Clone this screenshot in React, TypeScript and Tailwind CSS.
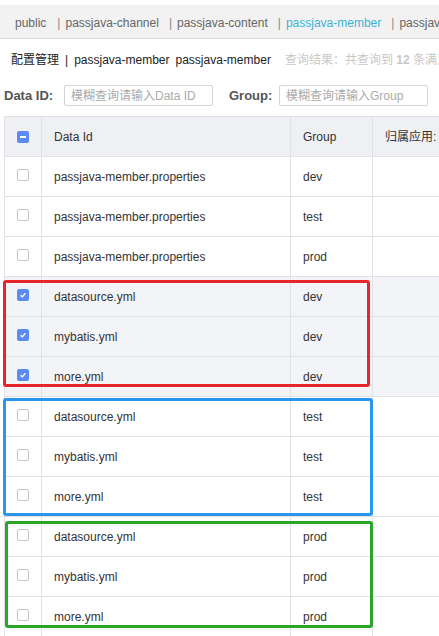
import React from "react";

const rows = [
  { id: "passjava-member.properties", group: "dev", checked: false },
  { id: "passjava-member.properties", group: "test", checked: false },
  { id: "passjava-member.properties", group: "prod", checked: false },
  { id: "datasource.yml", group: "dev", checked: true },
  { id: "mybatis.yml", group: "dev", checked: true },
  { id: "more.yml", group: "dev", checked: true },
  { id: "datasource.yml", group: "test", checked: false },
  { id: "mybatis.yml", group: "test", checked: false },
  { id: "more.yml", group: "test", checked: false },
  { id: "datasource.yml", group: "prod", checked: false },
  { id: "mybatis.yml", group: "prod", checked: false },
  { id: "more.yml", group: "prod", checked: false },
];

const tabs = ["passjava-channel", "passjava-content", "passjava-member", "passjava-user"];

const Checkbox = ({ checked }: { checked: boolean }) =>
  checked ? (
    <div className="w-[12px] h-[12px] rounded-[2px] bg-[#5b8af5] flex items-center justify-center">
      <svg width="8" height="8" viewBox="0 0 8 8">
        <path d="M1.5 4.2 L3.3 5.8 L6.5 2.3" stroke="white" strokeWidth="1.4" fill="none" />
      </svg>
    </div>
  ) : (
    <div className="w-[12px] h-[12px] rounded-[2px] border border-[#c4c6cc] bg-white" />
  );

const App = () => {
  return (
    <div
      className="w-[439px] h-[636px] overflow-hidden bg-white text-[#333] relative"
      style={{ fontFamily: '"Liberation Sans", "Noto Sans CJK SC", sans-serif' }}
    >
      <div className="mt-[5px] h-[34px] pt-[3px] bg-[#f2f2f2] border-b border-[#d9d9d9] flex items-center pl-[15px] text-[12px] text-[#666] whitespace-nowrap overflow-hidden">
        <span>public</span>
        {tabs.map((t, i) => (
          <span key={i} className={i === 0 ? "ml-[11px]" : "ml-[10px]"}>
            <span className="mr-[5px] text-[#888]">|</span>
            <span className={t === "passjava-member" ? "text-[#3ab4d6]" : ""}>{t}</span>
          </span>
        ))}
      </div>

      <div className="mt-[10px] ml-[4px] h-[21px] flex items-center whitespace-nowrap text-[12px]">
        <div className="w-[2px] h-[21px] bg-[#1c8fd3]" />
        <span className="ml-[7px] text-[#222]">配置管理</span>
        <span className="mx-[6px] text-[#222]">|</span>
        <span className="text-[#222]">passjava-member</span>
        <span className="ml-[6px] text-[#222]">passjava-member</span>
        <span className="ml-[14px] text-[#c8c8c8]">
          查询结果：共查询到 <b className="font-bold">12</b> 条满足要求的配置。
        </span>
      </div>

      <div className="mt-[15px] ml-[4px] flex items-center whitespace-nowrap">
        <span className="text-[13px] font-bold text-[#555] w-[60px]">Data ID:</span>
        <div className="w-[149px] h-[21px] border border-[#d4d4d4] rounded-[2px] flex items-center pl-[6px] text-[12px] text-[#aaa]">
          模糊查询请输入Data ID
        </div>
        <span className="ml-[16px] text-[13px] font-bold text-[#555] w-[50px]">Group:</span>
        <div className="w-[149px] h-[21px] border border-[#d4d4d4] rounded-[2px] flex items-center pl-[6px] text-[12px] text-[#aaa]">
          模糊查询请输入Group
        </div>
      </div>

      <div className="mt-[10px] ml-[4px] w-[480px] border-l border-t border-[#e1e2e6] text-[12px] text-[#333]">
        <div className="h-[40px] flex bg-[#eff0f3] border-b border-[#e1e2e6]">
          <div className="w-[37px] border-r border-[#e1e2e6] flex items-center justify-center">
            <div className="w-[12px] h-[12px] rounded-[2px] bg-[#5b8af5] flex items-center justify-center">
              <div className="w-[6px] h-[2px] bg-white" />
            </div>
          </div>
          <div className="w-[249px] border-r border-[#e1e2e6] flex items-center pl-[12px]">Data Id</div>
          <div className="w-[82px] border-r border-[#e1e2e6] flex items-center pl-[12px]">Group</div>
          <div className="flex-1 flex items-center pl-[12px]">归属应用:</div>
        </div>
        {rows.map((r, i) => (
          <div
            key={i}
            className={`h-[40px] flex border-b border-[#e1e2e6] ${r.checked ? "bg-[#f3f4f8]" : "bg-white"}`}
          >
            <div className="w-[37px] border-r border-[#e1e2e6] flex items-center justify-center pb-[3px]">
              <Checkbox checked={r.checked} />
            </div>
            <div className="w-[249px] border-r border-[#e1e2e6] flex items-center pl-[12px]">{r.id}</div>
            <div className="w-[82px] border-r border-[#e1e2e6] flex items-center pl-[12px]">{r.group}</div>
            <div className="flex-1" />
          </div>
        ))}
      </div>

      <div className="absolute left-[3px] top-[280px] w-[367px] h-[107px] border-[3px] border-[#e8262a] rounded-[3px] pointer-events-none" />
      <div className="absolute left-[3px] top-[398px] w-[370px] h-[118px] border-[3px] border-[#2b96ee] rounded-[3px] pointer-events-none" />
      <div className="absolute left-[5px] top-[521px] w-[368px] h-[107px] border-[3px] border-[#2aa52a] rounded-[3px] pointer-events-none" />
    </div>
  );
};

export default App;
